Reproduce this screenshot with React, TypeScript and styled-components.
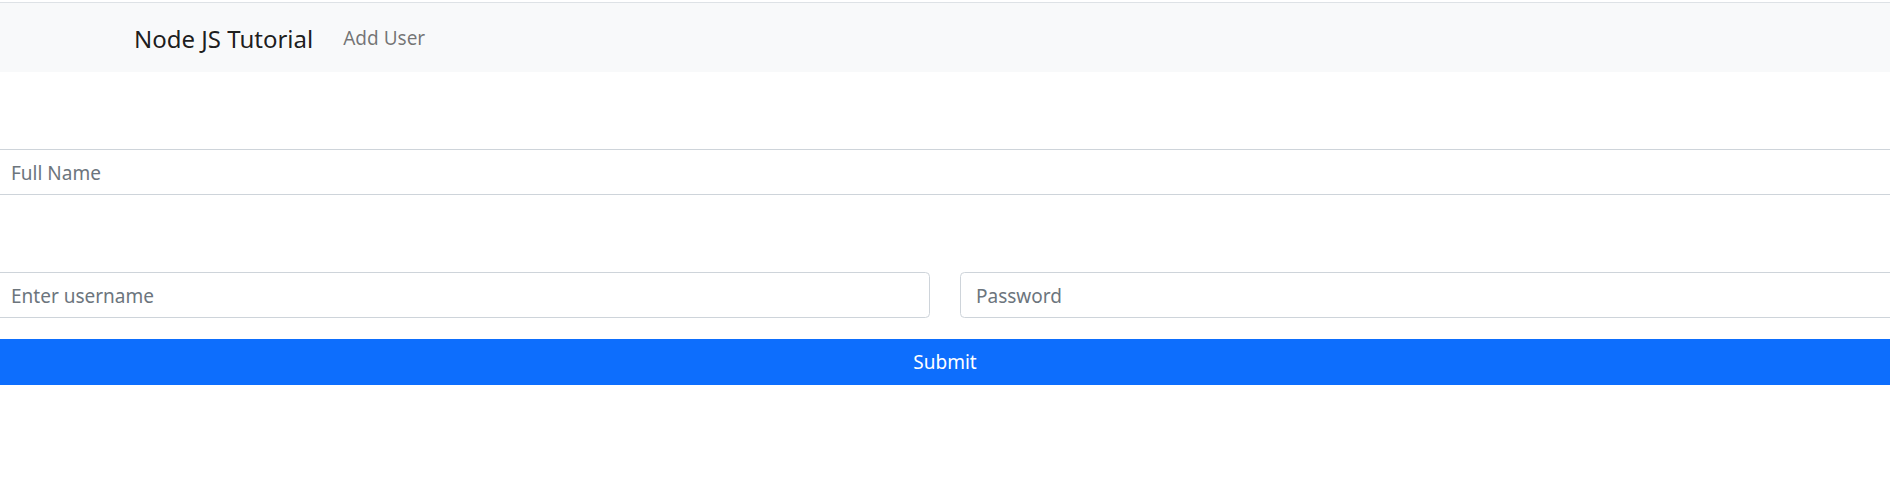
import React from 'react';
import styled, { createGlobalStyle } from 'styled-components';

const Global = createGlobalStyle`
  html, body { margin: 0; padding: 0; background: #fff; overflow: hidden; }
  body { font-family: "Noto Sans", "Open Sans", sans-serif; }
  * { box-sizing: border-box; }
`;

const Page = styled.div`
  width: 1890px;
  height: 492px;
  overflow: hidden;
  padding-top: 2px;
`;

const Nav = styled.nav`
  border-top: 1px solid #dee2e6;
  background: #f8f9fa;
  height: 70px;
  display: flex;
  align-items: center;
  gap: 30px;
  padding-left: 134px;
  padding-top: 2px;
`;

const Brand = styled.a`
  font-size: 24px;
  color: rgba(0, 0, 0, 0.9);
  text-decoration: none;
  line-height: 1.5;
`;

const NavLink = styled.a`
  font-size: 19px;
  color: rgba(0, 0, 0, 0.55);
  text-decoration: none;
  line-height: 1.5;
`;

const Form = styled.form`
  margin-left: -5px;
  width: 1900px;
  display: flex;
  flex-direction: column;
`;

const Input = styled.input<{ $top?: number }>`
  display: block;
  width: 100%;
  height: 46px;
  margin-top: ${(p) => p.$top ?? 0}px;
  padding: 1px 15px 0;
  border: 1px solid #ced4da;
  border-radius: 4.5px;
  font-family: inherit;
  font-size: 19px;
  color: #212529;
  background: #fff;
  &::placeholder { color: #6c757d; }
`;

const Row = styled.div`
  display: grid;
  grid-template-columns: 1fr 1fr;
  column-gap: 30px;
  margin-top: 77px;
`;

const Submit = styled.button`
  margin-top: 21px;
  height: 46px;
  width: 100%;
  border: 1px solid #0d6efd;
  border-radius: 4.5px;
  background: #0d6efd;
  color: #fff;
  font-family: inherit;
  font-size: 19px;
`;

export default function App() {
  return (
    <Page>
      <Global />
      <Nav>
        <Brand href="#">Node JS Tutorial</Brand>
        <NavLink href="#">Add User</NavLink>
      </Nav>
      <Form onSubmit={(e) => e.preventDefault()}>
        <Input $top={77} placeholder="Full Name" />
        <Row>
          <Input placeholder="Enter username" />
          <Input type="password" placeholder="Password" />
        </Row>
        <Submit type="submit">Submit</Submit>
      </Form>
    </Page>
  );
}
